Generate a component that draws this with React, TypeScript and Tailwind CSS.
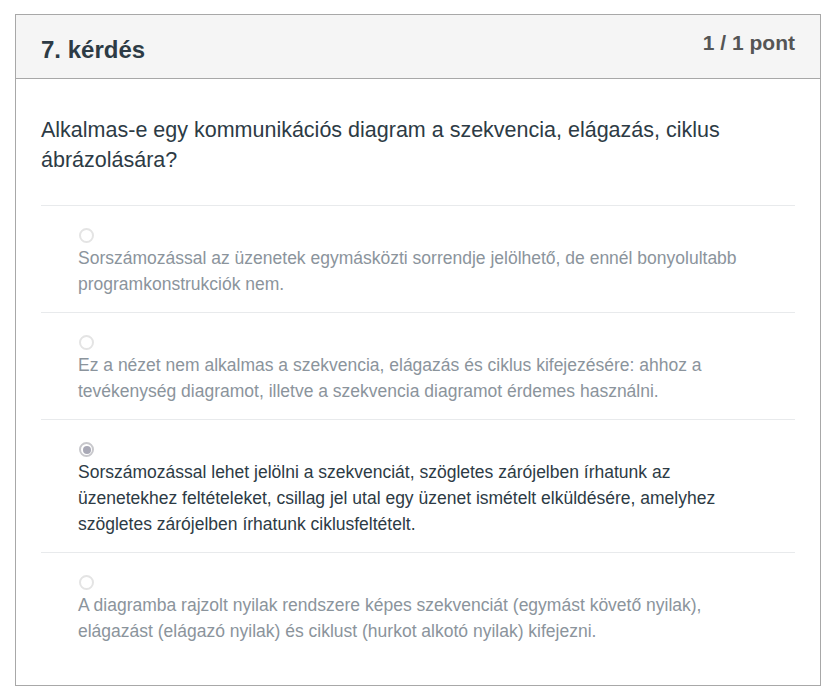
import React from "react";

interface Answer {
  text: string;
  selected?: boolean;
}

const answers: Answer[] = [
  {
    text: "Sorszámozással az üzenetek egymásközti sorrendje jelölhető, de ennél bonyolultabb programkonstrukciók nem.",
  },
  {
    text: "Ez a nézet nem alkalmas a szekvencia, elágazás és ciklus kifejezésére: ahhoz a tevékenység diagramot, illetve a szekvencia diagramot érdemes használni.",
  },
  {
    text: "Sorszámozással lehet jelölni a szekvenciát, szögletes zárójelben írhatunk az üzenetekhez feltételeket, csillag jel utal egy üzenet ismételt elküldésére, amelyhez szögletes zárójelben írhatunk ciklusfeltételt.",
    selected: true,
  },
  {
    text: "A diagramba rajzolt nyilak rendszere képes szekvenciát (egymást követő nyilak), elágazást (elágazó nyilak) és ciklust (hurkot alkotó nyilak) kifejezni.",
  },
];

const Radio = ({ checked }: { checked?: boolean }) =>
  checked ? (
    <div className="w-[15px] h-[15px] rounded-full border-2 border-[#c8c8cc] bg-white flex items-center justify-center">
      <div className="w-[8px] h-[8px] rounded-full bg-[#a9a9b6]" />
    </div>
  ) : (
    <div className="w-[15px] h-[15px] rounded-full border-2 border-[#e4e4e4] bg-white" />
  );

export default function App() {
  return (
    <div className="bg-white min-h-[698px] pt-[14px] pl-[15px] font-['Liberation_Sans',Arial,sans-serif]">
      <div className="w-[806px] h-[672px] border border-[#a8a8a8] bg-white">
        <div className="h-[64px] bg-[#f5f5f5] border-b border-[#a8a8a8] px-[25px] flex items-start justify-between">
          <h2 className="pt-[18px] text-[24px] leading-[33px] font-bold text-[#2d3b45]">7. kérdés</h2>
          <div className="pt-[13px] text-[21px] leading-[30px] font-bold text-[#555555]">1 / 1 pont</div>
        </div>
        <div className="px-[25px] pt-[36px]">
          <p className="text-[21.5px] leading-[30px] text-[#2d3b45]">
            Alkalmas-e egy kommunikációs diagram a szekvencia, elágazás, ciklus ábrázolására?
          </p>
          <div className="mt-[30px]">
            {answers.map((a, i) => (
              <div key={i} className="border-t border-[#e8eaec] pl-[37px] pr-[37px] pt-[22px] pb-[15px]">
                <div className="ml-[1px] mb-[2px]">
                  <Radio checked={a.selected} />
                </div>
                <div
                  className={`text-[17.5px] leading-[26px] ${
                    a.selected ? "text-[#2d3b45]" : "text-[#8b949c]"
                  }`}
                >
                  {a.text}
                </div>
              </div>
            ))}
          </div>
        </div>
      </div>
    </div>
  );
}
